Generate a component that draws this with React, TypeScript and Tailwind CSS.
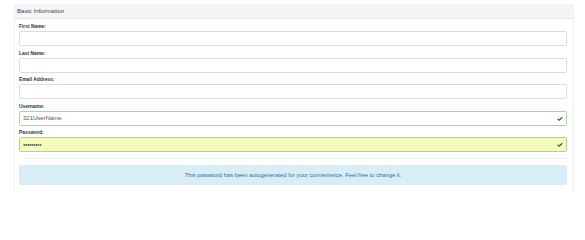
import { Check } from 'lucide-react'

function Field({ label, value, valid, password }: { label: string; value?: string; valid?: boolean; password?: boolean }) {
  return (
    <div className="mb-[3.5px]">
      <label className="block h-[7px] leading-[7px] mb-[1px] text-[4.9px] font-bold text-[#333]">{label}</label>
      <div
        className={
          'relative h-[15px] rounded-[1.5px] border flex items-center px-[3px] ' +
          (valid ? 'border-[#aed0a8] ' : 'border-[#dcdcdc] ') +
          (password ? 'bg-[#f7fab8]' : 'bg-white')
        }
      >
        <span className={password ? 'text-[4px] leading-none text-[#444] tracking-[-0.4px]' : 'text-[6px] leading-none text-[#555]'}>
          {value}
        </span>
        {valid && <Check className="absolute right-[3px] top-[4px] w-[6px] h-[6px] text-[#2f6b31]" strokeWidth={4.5} />}
      </div>
    </div>
  )
}

export default function App() {
  return (
    <div className="w-[585px] h-[201px] bg-white pt-[4px] pl-[14px] font-['Liberation_Sans',Arial,sans-serif]">
      <div className="w-[560px] h-[188px] border-r border-l border-[#f0f0f0]">
        <div className="h-[15px] bg-[#f5f5f5] border-b border-[#e6e6e6] flex items-center pl-[2px] text-[6.1px] text-[#444]">
          Basic Information
        </div>
        <div className="pl-[4px] pr-[6px] pt-[4px]">
          <Field label="First Name:" />
          <Field label="Last Name:" />
          <Field label="Email Address:" />
          <Field label="Username:" value="321UserName" valid />
          <Field label="Password:" value="●●●●●●●●●" valid password />
          <div className="mt-[5.5px] border-t border-[#f0f0f0]" />
          <div className="mt-[6.5px] h-[20px] rounded-[2px] bg-[#d9edf7] flex items-center justify-center text-[5.8px] text-[#31708f]">
            This password has been autogenerated for your convenience. Feel free to change it.
          </div>
        </div>
      </div>
    </div>
  )
}
